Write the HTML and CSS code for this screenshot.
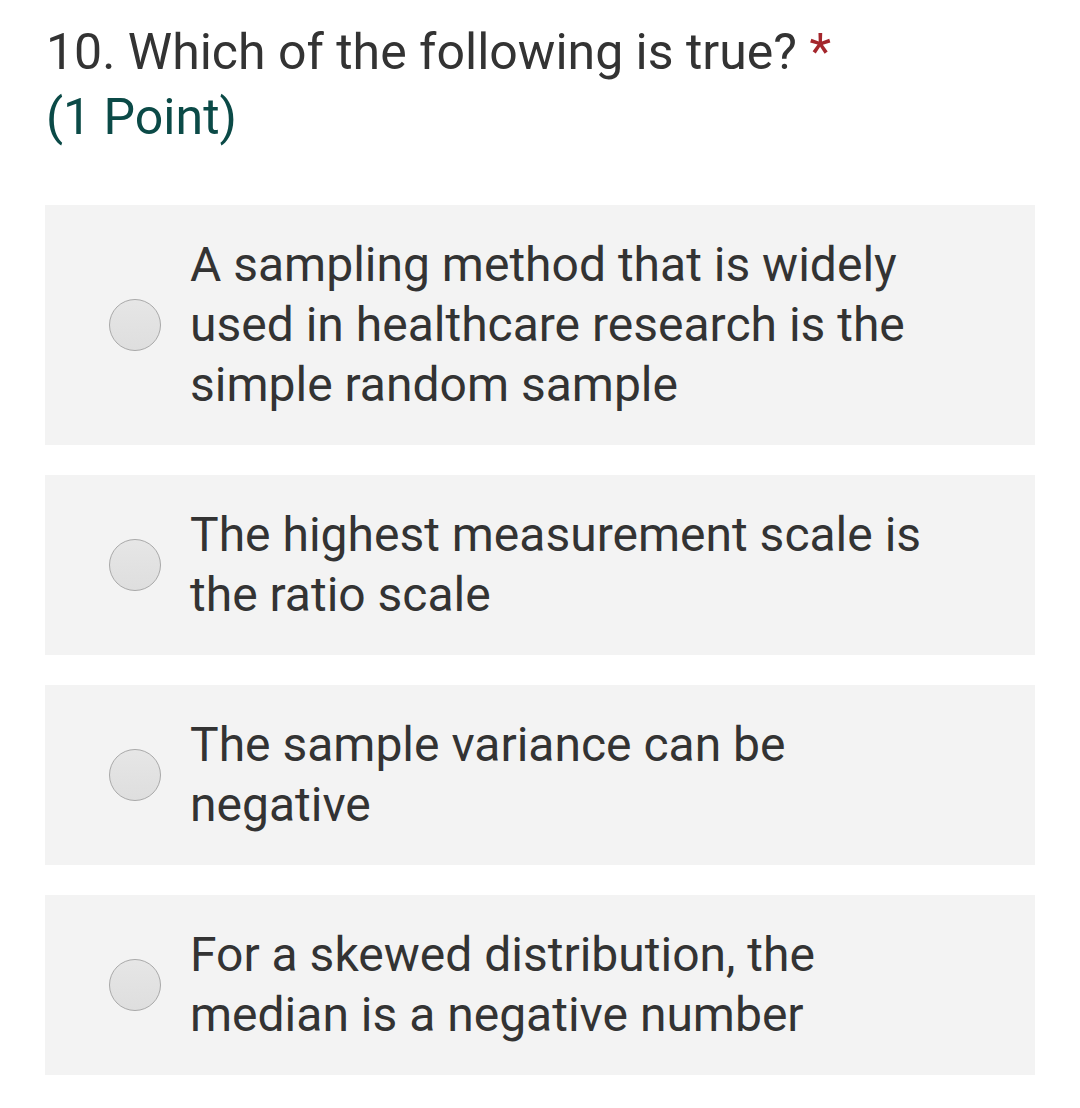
FILE: index.html
```html
<!DOCTYPE html>
<html lang="en">
<head>
<meta charset="utf-8">
<title>Question 10</title>
<link rel="stylesheet" href="styles.css">
</head>
<body>
<main class="question">
  <header class="q-head">
    <div class="q-title">10. Which of the following is true? <span class="req">*</span></div>
    <div class="q-points">(1 Point)</div>
  </header>
  <div class="options">
    <label class="option">
      <span class="radio"></span>
      <span class="opt-text">A sampling method that is widely used in healthcare research is the simple random sample</span>
    </label>
    <label class="option">
      <span class="radio"></span>
      <span class="opt-text">The highest measurement scale is the ratio scale</span>
    </label>
    <label class="option">
      <span class="radio"></span>
      <span class="opt-text">The sample variance can be negative</span>
    </label>
    <label class="option">
      <span class="radio"></span>
      <span class="opt-text">For a skewed distribution, the median is a negative number</span>
    </label>
  </div>
</main>
</body>
</html>
```

FILE: styles.css
```css
html, body {
  margin: 0;
  padding: 0;
  background: #ffffff;
}
body {
  font-family: Roboto, "Liberation Sans", Arial, sans-serif;
  color: #333333;
}
.question {
  padding: 20px 45px 0 45px;
}
.q-head {
  padding-left: 1px;
}
.q-title {
  font-size: 50px;
  line-height: 65px;
  color: #333333;
}
.req {
  color: #a4262c;
}
.q-points {
  font-size: 50px;
  line-height: 65px;
  color: #0b4a47;
}
.options {
  margin-top: 55px;
  display: flex;
  flex-direction: column;
  gap: 30px;
}
.option {
  display: flex;
  align-items: center;
  background: #f3f3f3;
  padding: 30px 80px 30px 64px;
}
.radio {
  flex: none;
  width: 52px;
  height: 52px;
  box-sizing: border-box;
  border-radius: 50%;
  border: 1.5px solid #a9a9a9;
  background: linear-gradient(#e6e6e6, #dedede);
  margin-right: 29px;
}
.opt-text {
  font-size: 48px;
  line-height: 60px;
  color: #333333;
}
```
